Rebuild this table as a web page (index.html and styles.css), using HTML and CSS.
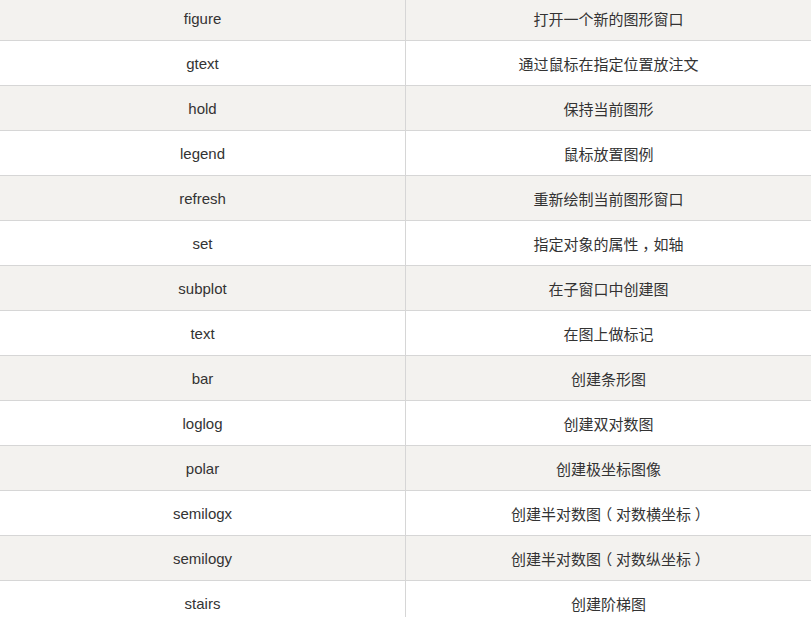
FILE: index.html
```html
<!DOCTYPE html>
<html lang="zh-CN">
<head>
<meta charset="utf-8">
<link rel="stylesheet" href="styles.css">
</head>
<body>
<table class="funcs">
<tbody>
<tr class="alt"><td class="name">figure</td><td class="desc">打开一个新的图形窗口</td></tr>
<tr><td class="name">gtext</td><td class="desc">通过鼠标在指定位置放注文</td></tr>
<tr class="alt"><td class="name">hold</td><td class="desc">保持当前图形</td></tr>
<tr><td class="name">legend</td><td class="desc">鼠标放置图例</td></tr>
<tr class="alt"><td class="name">refresh</td><td class="desc">重新绘制当前图形窗口</td></tr>
<tr><td class="name">set</td><td class="desc">指定对象的属性<span class="p">，</span>如轴</td></tr>
<tr class="alt"><td class="name">subplot</td><td class="desc">在子窗口中创建图</td></tr>
<tr><td class="name">text</td><td class="desc">在图上做标记</td></tr>
<tr class="alt"><td class="name">bar</td><td class="desc">创建条形图</td></tr>
<tr><td class="name">loglog</td><td class="desc">创建双对数图</td></tr>
<tr class="alt"><td class="name">polar</td><td class="desc">创建极坐标图像</td></tr>
<tr><td class="name">semilogx</td><td class="desc">创建半对数图<span class="p">（</span>对数横坐标<span class="p">）</span></td></tr>
<tr class="alt"><td class="name">semilogy</td><td class="desc">创建半对数图<span class="p">（</span>对数纵坐标<span class="p">）</span></td></tr>
<tr><td class="name">stairs</td><td class="desc">创建阶梯图</td></tr>
</tbody>
</table>
</body>
</html>
```
FILE: styles.css
```css
html, body {
  margin: 0;
  padding: 0;
  background: #ffffff;
}
body {
  font-family: "Liberation Sans", "Noto Sans CJK SC", sans-serif;
  font-size: 15px;
  color: #333333;
  overflow: hidden;
}
.funcs {
  border-collapse: separate;
  border-spacing: 0;
  width: 811px;
  margin-top: -4px;
  table-layout: fixed;
}
.funcs td {
  height: 45px;
  padding: 0;
  text-align: center;
  vertical-align: middle;
  border-bottom: 1px solid #d6d6d6;
  box-sizing: border-box;
}
.funcs td.name {
  width: 406px;
  border-right: 1px solid #d6d6d6;
}
.funcs tr.alt td {
  background: #f3f2ef;
}
.p {
  font-feature-settings: "halt" 1;
  padding: 0 0.25em;
}
```
